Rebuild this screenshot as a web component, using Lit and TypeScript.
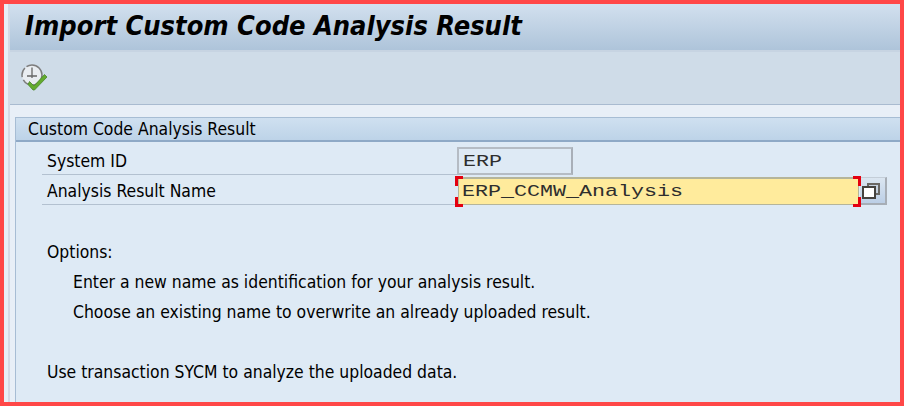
import { LitElement, html, css } from "lit";
import { customElement } from "lit/decorators.js";

@customElement("app-root")
export class AppRoot extends LitElement {
  static styles = css`
    :host {
      display: block;
      width: 904px;
      height: 406px;
      box-sizing: border-box;
      border: 4px solid #ff4747;
      background: #e8eff7;
      overflow: hidden;
      font-family: "DejaVu Sans", sans-serif;
      font-stretch: condensed;
      color: #000;
    }
    .shell {
      display: flex;
      height: 100%;
    }
    .rail {
      width: 4px;
      background: #e8eff7;
      border-right: 2px solid #d3dbe6;
      flex: none;
    }
    .main {
      flex: 1;
      min-width: 0;
      display: flex;
      flex-direction: column;
    }
    .title {
      height: 48px;
      flex: none;
      box-sizing: border-box;
      padding: 0 0 4px 15px;
      display: flex;
      align-items: center;
      background: linear-gradient(#d2e0ee, #aec4da);
      border-bottom: 2px solid #c7d4e2;
      font: italic bold 27px "DejaVu Sans", sans-serif;
      font-stretch: condensed;
      white-space: nowrap;
    }
    .toolbar {
      height: 53px;
      box-sizing: border-box;
      flex: none;
      padding-left: 10px;
      display: flex;
      align-items: center;
      padding-bottom: 2px;
      background: #cfdce8;
      border-bottom: 1px solid #a9bbd0;
    }
    .toolbar svg {
      display: block;
    }
    .content {
      flex: 1;
      padding: 12px 0 0 5px;
      min-height: 0;
      display: flex;
    }
    .panel {
      flex: 1;
      border-left: 1px solid #a7bdd4;
      background: #deeaf5;
      display: flex;
      flex-direction: column;
    }
    .phead {
      height: 25px;
      box-sizing: border-box;
      padding-left: 12px;
      display: flex;
      align-items: center;
      font-size: 17.4px;
      background: linear-gradient(#cfe0f0, #bdd3e8);
      border-top: 1px solid #a7bdd4;
      border-bottom: 2px solid #8ea9c6;
      white-space: nowrap;
    }
    .form {
      padding: 5px 0 0 26px;
      display: grid;
      grid-template-columns: 415px auto auto;
      grid-auto-rows: 30px;
      justify-content: start;
    }
    .label {
      display: flex;
      align-items: center;
      padding-left: 5px;
      font-size: 17.4px;
      border-bottom: 1px solid #b3c1d0;
      box-sizing: border-box;
      height: 28px;
    }
    .mono {
      box-sizing: border-box;
      display: flex;
      align-items: center;
      padding-left: 4px;
      height: 28px;
    }
    .mono span.v {
      font: 21.67px "Liberation Mono", monospace;
      color: #2e2e2e;
      display: block;
      transform: scaleY(0.8);
      white-space: pre;
    }
    .ro {
      width: 116px;
      border: 2px solid #b5bcc4;
      border-right-color: #a8afb8;
      background: #deeaf5;
      grid-column: 2 / 4;
    }
    .req {
      position: relative;
      width: 401px;
      margin-left: 1px;
      border: 1px solid #b5b59a;
      border-top-width: 2px;
      background: #ffeb9c;
      padding-left: 3px;
    }
    .corner {
      position: absolute;
      width: 5px;
      height: 7px;
      border: 0 solid #e4000f;
    }
    .tl { left: -4px; top: -3px; border-width: 3px 0 0 3px; }
    .bl { left: -4px; bottom: -3px; border-width: 0 0 3px 3px; }
    .tr { right: -3px; top: -3px; border-width: 3px 3px 0 0; }
    .br { right: -3px; bottom: -3px; border-width: 0 3px 3px 0; }
    .f4 {
      width: 27px;
      height: 28px;
      margin-left: 1px;
      box-sizing: border-box;
      padding: 4px 0 0 1px;
      border-right: 2px solid #a7aeb6;
      border-bottom: 2px solid #a7aeb6;
      border-top: 1px solid #c4ced8;
      background: linear-gradient(#dbe6f1, #bccfe6);
    }
    .f4 svg {
      display: block;
    }
    .text {
      padding: 30px 0 0 31px;
      font-size: 17.4px;
      line-height: 30px;
      white-space: nowrap;
    }
    .text div {
      height: 30px;
    }
    .indent {
      padding-left: 26px;
    }
    .gap {
      margin-top: 30px;
    }
  `;

  render() {
    return html`
      <div class="shell">
        <div class="rail"></div>
        <div class="main">
          <div class="title">Import Custom Code Analysis Result</div>
          <div class="toolbar">
            <svg width="30" height="28" viewBox="0 0 30 28" aria-hidden="true">
              <circle cx="12" cy="12" r="10" fill="#e9edf1" stroke="#7d7d7d" stroke-width="1.5" stroke-dasharray="26 3 10 2" />
              <path d="M12 4.5V15M7 13H17" stroke="#666" stroke-width="1.3" fill="none" />
              <path d="M9.5 18.5l4.5 4.5L24.5 11.5l2.5 2.5L14.5 27h-1.5L8 21.5z" fill="#64ab2e" stroke="#49872a" stroke-width="0.8" stroke-linejoin="round" />
            </svg>
          </div>
          <div class="content">
            <div class="panel">
              <div class="phead">Custom Code Analysis Result</div>
              <div class="form">
                <div class="label">System ID</div>
                <div class="mono ro"><span class="v">ERP</span></div>
                <div class="label">Analysis Result Name</div>
                <div class="mono req">
                  <span class="v">ERP_CCMW_Analysis</span>
                  <span class="corner tl"></span><span class="corner bl"></span>
                  <span class="corner tr"></span><span class="corner br"></span>
                </div>
                <div class="f4">
                  <svg width="19" height="18" viewBox="0 0 19 18" aria-hidden="true">
                    <rect x="7" y="2" width="11" height="10" fill="#c5d2e0" stroke="#6a6864" stroke-width="2" />
                    <rect x="2" y="5" width="12" height="11" fill="#fff" stroke="#45433f" stroke-width="2" />
                  </svg>
                </div>
              </div>
              <div class="text">
                <div>Options:</div>
                <div class="indent">Enter a new name as identification for your analysis result.</div>
                <div class="indent">Choose an existing name to overwrite an already uploaded result.</div>
                <div class="gap">Use transaction SYCM to analyze the uploaded data.</div>
              </div>
            </div>
          </div>
        </div>
      </div>
    `;
  }
}
